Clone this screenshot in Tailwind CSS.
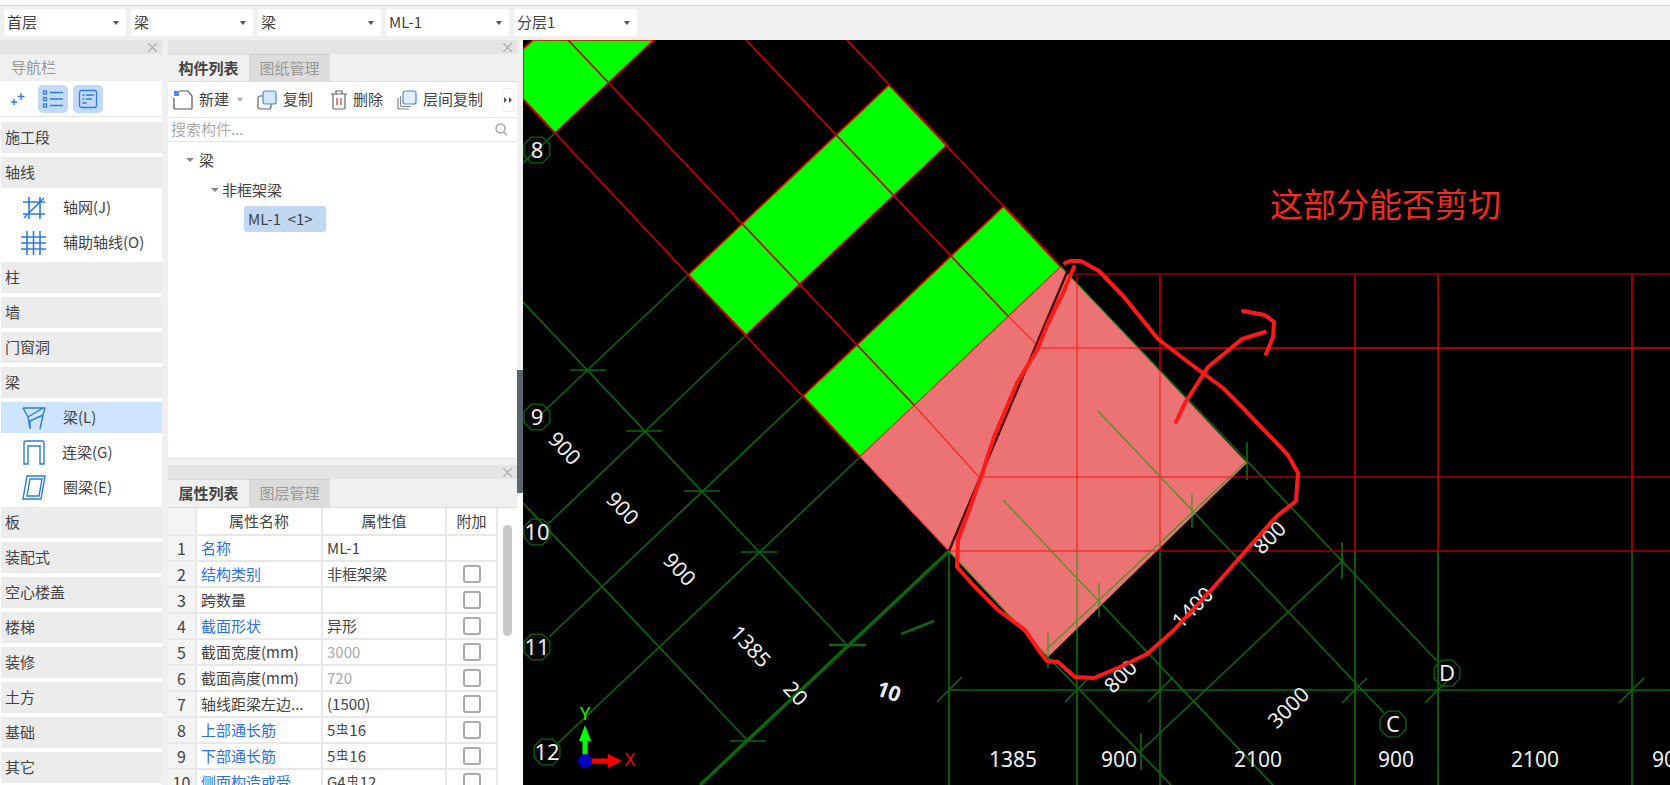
<!DOCTYPE html>
<html lang="zh">
<head>
    <meta charset="UTF-8">
    <title>构件列表</title>
    <script src="https://cdn.jsdelivr.net/npm/@tailwindcss/browser@4"></script>
</head>
<body class="w-[1670px] h-[785px] overflow-hidden bg-[#f0f0f0] text-[15px] text-[#444] font-['Noto_Sans_CJK_SC','Noto_Sans',sans-serif]">
    <div class="h-[6px] bg-white border-b border-[#d8d8d8]"></div>

    <!-- Floor / type selectors -->
    <div class="h-[34px] flex items-start pt-[3px] pl-[4px] gap-[5px] bg-[#f0f0f0]">
        <div class="w-[122px] h-[27px] flex items-center justify-between px-[3px] bg-white rounded-[3px]"><span>首层</span><span class="border-x-[3px] border-x-transparent border-t-[4px] border-t-[#555] mr-[4px]"></span></div>
        <div class="w-[122px] h-[27px] flex items-center justify-between px-[3px] bg-white rounded-[3px]"><span>梁</span><span class="border-x-[3px] border-x-transparent border-t-[4px] border-t-[#555] mr-[4px]"></span></div>
        <div class="w-[123px] h-[27px] flex items-center justify-between px-[3px] bg-white rounded-[3px]"><span>梁</span><span class="border-x-[3px] border-x-transparent border-t-[4px] border-t-[#555] mr-[4px]"></span></div>
        <div class="w-[123px] h-[27px] flex items-center justify-between px-[3px] bg-white rounded-[3px]"><span>ML-1</span><span class="border-x-[3px] border-x-transparent border-t-[4px] border-t-[#555] mr-[4px]"></span></div>
        <div class="w-[123px] h-[27px] flex items-center justify-between px-[3px] bg-white rounded-[3px]"><span>分层1</span><span class="border-x-[3px] border-x-transparent border-t-[4px] border-t-[#555] mr-[4px]"></span></div>
    </div>

    <div class="flex h-[745px]">
        <!-- Navigation -->
        <aside class="w-[162px] shrink-0 bg-white overflow-hidden">
            <div class="h-[14px] bg-[#e4e4e4] flex items-center justify-end pr-[5px]">
                <svg class="w-[9px] h-[9px]" viewBox="0 0 9 9" stroke="#aaa" stroke-width="1.200"><path d="M0 0L9 9M9 0L0 9"/></svg>
            </div>
            <div class="h-[27px] bg-[#f0f0f0] flex items-center pl-[11px] text-[#999]">导航栏</div>
            <div class="h-[36px] flex items-center border-b border-[#e4e4e4]">
                <svg class="ml-[10px] w-[16px] h-[16px]" viewBox="0 0 16 16" fill="none" stroke="#2d7ce0" stroke-width="1.400"><path d="M11 2v7M7.500 5.500h7M4 8v6M1 11h6"/></svg>
                <div class="ml-[12px] w-[30px] h-[28px] bg-[#c2daf5] rounded-[5px] flex items-center justify-center">
                    <svg class="w-[22px] h-[20px]" viewBox="0 0 22 20" fill="none" stroke="#2d7ce0" stroke-width="1.300"><rect x="1.500" y="2" width="3" height="3"/><rect x="1.500" y="8.500" width="3" height="3"/><rect x="1.500" y="15" width="3" height="3"/><path d="M8 3.500h13M8 10h13M8 16.500h13"/></svg>
                </div>
                <div class="ml-[5px] w-[30px] h-[28px] bg-[#c2daf5] rounded-[5px] flex items-center justify-center">
                    <svg class="w-[20px] h-[20px]" viewBox="0 0 20 20" fill="none" stroke="#2d7ce0" stroke-width="1.300"><rect x="1.500" y="1.500" width="17" height="17" rx="2"/><path d="M4.500 6h2M8 6h8M4.500 10h2M8 10h6M4.500 14h4"/></svg>
                </div>
            </div>
            <div class="pt-[5px] pl-[1px]">
                <div class="h-[31px] mb-[4px] bg-[#ececec] flex items-center pl-[4px]">施工段</div>
                <div class="h-[31px] mb-[4px] bg-[#ececec] flex items-center pl-[4px]">轴线</div>
                <div class="h-[31px] mb-[4px] flex items-center">
                    <svg class="ml-[21px] w-[24px] h-[24px]" viewBox="0 0 24 24" fill="none" stroke="#2d7ce0" stroke-width="1.600"><path d="M7 1v22M18 1v22M1 6h22M1 18h22M2 22L22 2"/></svg>
                    <span class="ml-[17px]">轴网(J)</span>
                </div>
                <div class="h-[31px] mb-[4px] flex items-center">
                    <svg class="ml-[20px] w-[25px] h-[24px]" viewBox="0 0 25 24" fill="none" stroke="#2d7ce0" stroke-width="1.600"><path d="M6 0v24M12.500 0v24M19 0v24M0 6h25M0 12h25M0 18h25"/></svg>
                    <span class="ml-[17px]">辅助轴线(O)</span>
                </div>
                <div class="h-[31px] mb-[4px] bg-[#ececec] flex items-center pl-[4px]">柱</div>
                <div class="h-[31px] mb-[4px] bg-[#ececec] flex items-center pl-[4px]">墙</div>
                <div class="h-[31px] mb-[4px] bg-[#ececec] flex items-center pl-[4px]">门窗洞</div>
                <div class="h-[31px] mb-[4px] bg-[#ececec] flex items-center pl-[4px]">梁</div>
                <div class="h-[31px] mb-[4px] bg-[#cfe5fd] flex items-center">
                    <svg class="ml-[21px] w-[24px] h-[24px]" viewBox="0 0 24 24" fill="none" stroke="#2d7ce0" stroke-width="1.400"><path d="M1 2h22l-2 7-3 14M1 2l5 9 2 12V15L21 9M6 11l15-9"/></svg>
                    <span class="ml-[17px]">梁(L)</span>
                </div>
                <div class="h-[31px] mb-[4px] flex items-center">
                    <svg class="ml-[22px] w-[22px] h-[25px]" viewBox="0 0 22 25" fill="none" stroke="#2d7ce0" stroke-width="1.400"><path d="M1 24V3q0-2 2-2h16q2 0 2 2v21h-4V6H5v18z"/></svg>
                    <span class="ml-[17px]">连梁(G)</span>
                </div>
                <div class="h-[31px] mb-[4px] flex items-center">
                    <svg class="ml-[21px] w-[24px] h-[25px]" viewBox="0 0 24 25" fill="none" stroke="#2d7ce0" stroke-width="1.400"><path d="M5 1h18l-4 23H1zM8 4h12l-3 17H5z"/></svg>
                    <span class="ml-[17px]">圈梁(E)</span>
                </div>
                <div class="h-[31px] mb-[4px] bg-[#ececec] flex items-center pl-[4px]">板</div>
                <div class="h-[31px] mb-[4px] bg-[#ececec] flex items-center pl-[4px]">装配式</div>
                <div class="h-[31px] mb-[4px] bg-[#ececec] flex items-center pl-[4px]">空心楼盖</div>
                <div class="h-[31px] mb-[4px] bg-[#ececec] flex items-center pl-[4px]">楼梯</div>
                <div class="h-[31px] mb-[4px] bg-[#ececec] flex items-center pl-[4px]">装修</div>
                <div class="h-[31px] mb-[4px] bg-[#ececec] flex items-center pl-[4px]">土方</div>
                <div class="h-[31px] mb-[4px] bg-[#ececec] flex items-center pl-[4px]">基础</div>
                <div class="h-[31px] mb-[4px] bg-[#ececec] flex items-center pl-[4px]">其它</div>
            </div>
        </aside>

        <div class="w-[6px] shrink-0 bg-[#f0f0f0]"></div>

        <!-- Component list + properties -->
        <section class="w-[349px] shrink-0 flex flex-col overflow-hidden">
            <div class="h-[14px] shrink-0 bg-[#e4e4e4] flex items-center justify-end pr-[5px]">
                <svg class="w-[9px] h-[9px]" viewBox="0 0 9 9" stroke="#aaa" stroke-width="1.200"><path d="M0 0L9 9M9 0L0 9"/></svg>
            </div>
            <div class="h-[28px] shrink-0 flex bg-[#f0f0f0] border-b border-[#ddd]">
                <div class="w-[81px] flex items-center justify-center font-bold text-[#444] border-t border-[#ddd]">构件列表</div>
                <div class="w-[81px] flex items-center justify-center bg-[#dcdcdc] text-[#999] border-t border-[#ccc]">图纸管理</div>
            </div>
            <div class="h-[36px] shrink-0 flex items-center bg-white border-b border-[#e4e4e4]">
                <svg class="ml-[5px] w-[20px] h-[20px]" viewBox="0 0 20 20" fill="none"><path d="M1 8v10q0 1 1 1h16q1 0 1-1V6l-4-5H6" stroke="#555" stroke-width="1.200"/><rect x="1" y="1" width="5" height="5" fill="#4a90e8"/></svg>
                <span class="ml-[6px]">新建</span>
                <span class="ml-[8px] border-x-[3px] border-x-transparent border-t-[4px] border-t-[#aaa]"></span>
                <svg class="ml-[14px] w-[20px] h-[20px]" viewBox="0 0 20 20" fill="none"><rect x="1" y="6" width="13" height="13" rx="2" stroke="#666" stroke-width="1.200"/><rect x="6" y="1" width="13" height="13" rx="2" fill="#d6e7fb" stroke="#3d8ae8" stroke-width="1.200"/></svg>
                <span class="ml-[6px]">复制</span>
                <svg class="ml-[17px] w-[18px] h-[20px]" viewBox="0 0 18 20" fill="none" stroke="#666" stroke-width="1.200"><path d="M1 4h16M6 4V1h6v3M3 4v14q0 1 1 1h10q1 0 1-1V4"/><path d="M7 8v7M11 8v7" stroke="#e03030"/></svg>
                <span class="ml-[5px]">删除</span>
                <svg class="ml-[14px] w-[20px] h-[20px]" viewBox="0 0 20 20" fill="none"><path d="M1 8v9q0 2 2 2h9M3.500 6v9q0 1.500 1.500 1.500h9" stroke="#888" stroke-width="1.200"/><rect x="6" y="1" width="13" height="13" rx="2" fill="#e4effc" stroke="#3d8ae8" stroke-width="1.200"/></svg>
                <span class="ml-[6px]">层间复制</span>
                <div class="ml-[19px] w-[12px] h-[24px] bg-white border border-[#eee] rounded-[3px] flex items-center justify-center">
                    <svg class="w-[8px] h-[6px]" viewBox="0 0 8 6" fill="#555"><path d="M0 0l3 3-3 3zM5 0l3 3-3 3z"/></svg>
                </div>
            </div>
            <div class="h-[24px] shrink-0 flex items-center justify-between px-[3px] pr-[9px] bg-white border-b border-[#e4e4e4] text-[#aaa]">
                <span>搜索构件...</span>
                <svg class="w-[13px] h-[13px]" viewBox="0 0 13 13" fill="none" stroke="#aaa" stroke-width="1.500"><circle cx="5.500" cy="5.500" r="4.500"/><path d="M9 9l3 3"/></svg>
            </div>
            <div class="h-[317px] shrink-0 bg-white border-b border-[#e4e4e4] pt-[3px]">
                <div class="h-[30px] flex items-center pl-[18px]"><span class="border-x-[4px] border-x-transparent border-t-[4px] border-t-[#888] mr-[5px]"></span>梁</div>
                <div class="h-[30px] flex items-center pl-[43px]"><span class="border-x-[4px] border-x-transparent border-t-[4px] border-t-[#888] mr-[3px]"></span>非框架梁</div>
                <div class="mt-[1px] ml-[76px] w-[82px] h-[26px] flex items-center pl-[4px] bg-[#c0d8f1] rounded-[3px] whitespace-pre">ML-1  &lt;1&gt;</div>
            </div>
            <div class="h-[6px] shrink-0 bg-[#f0f0f0]"></div>
            <div class="h-[14px] shrink-0 bg-[#e4e4e4] flex items-center justify-end pr-[5px]">
                <svg class="w-[9px] h-[9px]" viewBox="0 0 9 9" stroke="#aaa" stroke-width="1.200"><path d="M0 0L9 9M9 0L0 9"/></svg>
            </div>
            <div class="h-[29px] shrink-0 flex bg-[#f0f0f0] border-b border-[#ddd]">
                <div class="w-[81px] flex items-center justify-center font-bold text-[#444] border-t border-[#ddd]">属性列表</div>
                <div class="w-[81px] flex items-center justify-center bg-[#dcdcdc] text-[#999] border-t border-[#ccc]">图层管理</div>
            </div>
            <div class="flex-1 flex bg-white min-h-0">
                <table class="w-[329px] table-fixed border-collapse self-start shrink-0">
                    <colgroup><col class="w-[28px]"><col class="w-[126px]"><col class="w-[124px]"><col class="w-[51px]"></colgroup>
                    <thead>
                        <tr class="h-[27px]">
                            <th class="font-normal border-r-2 border-b-2 border-[#e8e8e8] bg-[#f4f4f4]"></th>
                            <th class="font-normal border-r-2 border-b-2 border-[#e8e8e8] text-center">属性名称</th>
                            <th class="font-normal border-r-2 border-b-2 border-[#e8e8e8] text-center">属性值</th>
                            <th class="font-normal border-r-2 border-b-2 border-[#e8e8e8] text-center">附加</th>
                        </tr>
                    </thead>
                    <tbody>
                        <tr class="h-[26px]">
                            <td class="border-r-2 border-b-2 border-[#e8e8e8] bg-[#f4f4f4] text-center text-[16px]">1</td>
                            <td class="border-r-2 border-b-2 border-[#e8e8e8] pl-[4px] text-[#2f6fe8]">名称</td>
                            <td class="border-r-2 border-b-2 border-[#e8e8e8] pl-[4px]">ML-1</td>
                            <td class="border-r-2 border-b-2 border-[#e8e8e8]"></td>
                        </tr>
                        <tr class="h-[26px]">
                            <td class="border-r-2 border-b-2 border-[#e8e8e8] bg-[#f4f4f4] text-center text-[16px]">2</td>
                            <td class="border-r-2 border-b-2 border-[#e8e8e8] pl-[4px] text-[#2f6fe8]">结构类别</td>
                            <td class="border-r-2 border-b-2 border-[#e8e8e8] pl-[4px]">非框架梁</td>
                            <td class="border-r-2 border-b-2 border-[#e8e8e8]"><div class="w-[18px] h-[18px] mx-auto border-2 border-[#aaa] rounded-[3px]"></div></td>
                        </tr>
                        <tr class="h-[26px]">
                            <td class="border-r-2 border-b-2 border-[#e8e8e8] bg-[#f4f4f4] text-center text-[16px]">3</td>
                            <td class="border-r-2 border-b-2 border-[#e8e8e8] pl-[4px]">跨数量</td>
                            <td class="border-r-2 border-b-2 border-[#e8e8e8] pl-[4px]"></td>
                            <td class="border-r-2 border-b-2 border-[#e8e8e8]"><div class="w-[18px] h-[18px] mx-auto border-2 border-[#aaa] rounded-[3px]"></div></td>
                        </tr>
                        <tr class="h-[26px]">
                            <td class="border-r-2 border-b-2 border-[#e8e8e8] bg-[#f4f4f4] text-center text-[16px]">4</td>
                            <td class="border-r-2 border-b-2 border-[#e8e8e8] pl-[4px] text-[#2f6fe8]">截面形状</td>
                            <td class="border-r-2 border-b-2 border-[#e8e8e8] pl-[4px]">异形</td>
                            <td class="border-r-2 border-b-2 border-[#e8e8e8]"><div class="w-[18px] h-[18px] mx-auto border-2 border-[#aaa] rounded-[3px]"></div></td>
                        </tr>
                        <tr class="h-[26px]">
                            <td class="border-r-2 border-b-2 border-[#e8e8e8] bg-[#f4f4f4] text-center text-[16px]">5</td>
                            <td class="border-r-2 border-b-2 border-[#e8e8e8] pl-[4px]">截面宽度(mm)</td>
                            <td class="border-r-2 border-b-2 border-[#e8e8e8] pl-[4px] text-[#aaa]">3000</td>
                            <td class="border-r-2 border-b-2 border-[#e8e8e8]"><div class="w-[18px] h-[18px] mx-auto border-2 border-[#aaa] rounded-[3px]"></div></td>
                        </tr>
                        <tr class="h-[26px]">
                            <td class="border-r-2 border-b-2 border-[#e8e8e8] bg-[#f4f4f4] text-center text-[16px]">6</td>
                            <td class="border-r-2 border-b-2 border-[#e8e8e8] pl-[4px]">截面高度(mm)</td>
                            <td class="border-r-2 border-b-2 border-[#e8e8e8] pl-[4px] text-[#aaa]">720</td>
                            <td class="border-r-2 border-b-2 border-[#e8e8e8]"><div class="w-[18px] h-[18px] mx-auto border-2 border-[#aaa] rounded-[3px]"></div></td>
                        </tr>
                        <tr class="h-[26px]">
                            <td class="border-r-2 border-b-2 border-[#e8e8e8] bg-[#f4f4f4] text-center text-[16px]">7</td>
                            <td class="border-r-2 border-b-2 border-[#e8e8e8] pl-[4px] whitespace-nowrap">轴线距梁左边...</td>
                            <td class="border-r-2 border-b-2 border-[#e8e8e8] pl-[4px]">(1500)</td>
                            <td class="border-r-2 border-b-2 border-[#e8e8e8]"><div class="w-[18px] h-[18px] mx-auto border-2 border-[#aaa] rounded-[3px]"></div></td>
                        </tr>
                        <tr class="h-[26px]">
                            <td class="border-r-2 border-b-2 border-[#e8e8e8] bg-[#f4f4f4] text-center text-[16px]">8</td>
                            <td class="border-r-2 border-b-2 border-[#e8e8e8] pl-[4px] text-[#2f6fe8]">上部通长筋</td>
                            <td class="border-r-2 border-b-2 border-[#e8e8e8] pl-[4px]">5<span class="text-[12px] align-[2px] mx-[1px]">虫</span>16</td>
                            <td class="border-r-2 border-b-2 border-[#e8e8e8]"><div class="w-[18px] h-[18px] mx-auto border-2 border-[#aaa] rounded-[3px]"></div></td>
                        </tr>
                        <tr class="h-[26px]">
                            <td class="border-r-2 border-b-2 border-[#e8e8e8] bg-[#f4f4f4] text-center text-[16px]">9</td>
                            <td class="border-r-2 border-b-2 border-[#e8e8e8] pl-[4px] text-[#2f6fe8]">下部通长筋</td>
                            <td class="border-r-2 border-b-2 border-[#e8e8e8] pl-[4px]">5<span class="text-[12px] align-[2px] mx-[1px]">虫</span>16</td>
                            <td class="border-r-2 border-b-2 border-[#e8e8e8]"><div class="w-[18px] h-[18px] mx-auto border-2 border-[#aaa] rounded-[3px]"></div></td>
                        </tr>
                        <tr class="h-[26px]">
                            <td class="border-r-2 border-b-2 border-[#e8e8e8] bg-[#f4f4f4] text-center text-[16px]">10</td>
                            <td class="border-r-2 border-b-2 border-[#e8e8e8] pl-[4px] text-[#2f6fe8] whitespace-nowrap">侧面构造或受...</td>
                            <td class="border-r-2 border-b-2 border-[#e8e8e8] pl-[4px]">G4<span class="text-[12px] align-[2px] mx-[1px]">虫</span>12</td>
                            <td class="border-r-2 border-b-2 border-[#e8e8e8]"><div class="w-[18px] h-[18px] mx-auto border-2 border-[#aaa] rounded-[3px]"></div></td>
                        </tr>
                    </tbody>
                </table>
                <div class="flex-1 flex justify-center pt-[17px]"><div class="w-[9px] h-[111px] bg-[#c8c8c8] rounded-full"></div></div>
            </div>
        </section>

        <!-- Splitter -->
        <div class="w-[6px] shrink-0 bg-white flex flex-col">
            <div class="h-[330px] bg-[#f0f0f0]"></div>
            <div class="h-[123px] bg-[#5a6570]"></div>
        </div>

        <!-- CAD viewport: coordinates in the viewBox match screen pixels -->
        <svg class="flex-1 h-[745px] bg-black" viewBox="523 40 1147 745" fill="none" font-family="'Noto Sans','Noto Sans CJK SC',sans-serif">
            <defs>
                <clipPath id="pinkClip"><polygon points="1061,267 1247,463 1048,657 860,457"/></clipPath>
                <polygon id="oct" points="12.900,5.400 5.400,12.900 -5.400,12.900 -12.900,5.400 -12.900,-5.400 -5.400,-12.900 5.400,-12.900 12.900,-5.400"/>
                <g id="greenLines">
                    <path d="M949 551V785M1077 551V785M1160 551V785M1355 551V785M1438 551V785M1632 551V785M949 690H1670"/>
                    <path d="M523 302L847 645M523 503L748 741M523 163L555 133M540 415L688 275M549 523L746 335M549 637L803 396M558 743L860 457"/>
                    <path d="M1098 411L1384 713M1003 500L1273 785M1247 461L1437 661M949 551L1048 657L1171 785M1061 267L1247 461"/>
                    <path d="M1247 461L1046 650M1342 561L1141 751"/>
                    <path d="M570 370H606M626 431H662M684 491H720M741 552H777M730 741H766"/>
                    <path d="M1048 633V668M1099 583V617M1247 442V480M1192 494V528M1342 542V579M1141 733V770"/>
                    <path d="M937 702L962 677M1065 702L1090 677M1148 702L1173 677M1342 703L1367 678M1425 703L1450 678M1619 703L1644 678"/>
                </g>
            </defs>

            <!-- Grid -->
            <use href="#greenLines" stroke="#0d660d" stroke-width="1.700"/>
            <path d="M700 785L949 551" stroke="#0d660d" stroke-width="3.500"/>
            <path d="M829 645H866" stroke="#0d660d" stroke-width="2.500"/>
            <path d="M901 634L934 621" stroke="#0d660d" stroke-width="2.500"/>
            <path d="M1077 274V551M1160 274V551M1355 274V551M1438 274V551M1632 274V551" stroke="#b30000" stroke-width="1.700"/>
            <path d="M1077 274H1670" stroke="#8a0000" stroke-width="1.700"/>
            <path d="M1037 348H1670" stroke="#e00000" stroke-width="1.700"/>
            <path d="M979 477H1670M949 551H1670" stroke="#a80000" stroke-width="1.700"/>

            <!-- Beam slabs -->
            <polygon points="533,40 654,40 555,133 523,99 523,49" fill="#00ff00" stroke="#e00000" stroke-width="1.700"/>
            <polygon points="889,85 947,145 746,335 688,275" fill="#00ff00" stroke="#e00000" stroke-width="1.700"/>
            <polygon points="1004,206 1061,267 860,457 803,396" fill="#00ff00" stroke="#e00000" stroke-width="1.700"/>
            <polygon points="1061,267 1247,463 1048,657 860,457" fill="#ec7373"/>
            <path d="M568 40L914 405M523 99L860 457M746 40L1008 316M847 40L1061 267" stroke="#c80000" stroke-width="1.700"/>

            <!-- Lines seen through the pink selection -->
            <g clip-path="url(#pinkClip)">
                <use href="#greenLines" stroke="#5f8f2f" stroke-width="1.500"/>
                <path d="M1077 274V551M1160 274V551M1037 348H1670M979 477H1670M949 551H1670" stroke="#f53030" stroke-width="1.500"/>
                <path d="M860 457L949 551M914 405L979 477M1008 316L1037 345" stroke="#f53030" stroke-width="1.400"/>
            </g>
            <path d="M949 551L1068 270" stroke="#4a0808" stroke-width="2.500"/>

            <!-- Axis bubbles -->
            <g stroke="#0d660d" stroke-width="1.300">
                <use href="#oct" x="537" y="150"/>
                <use href="#oct" x="537" y="417"/>
                <use href="#oct" x="537" y="532"/>
                <use href="#oct" x="537" y="647"/>
                <use href="#oct" x="547" y="752"/>
                <use href="#oct" x="1393" y="724"/>
                <use href="#oct" x="1447" y="673"/>
            </g>
            <g fill="#eeeeee" font-size="22" text-anchor="middle">
                <text x="537" y="158">8</text>
                <text x="537" y="425">9</text>
                <text x="537" y="540">10</text>
                <text x="537" y="655">11</text>
                <text x="547" y="760">12</text>
                <text x="1393" y="732">C</text>
                <text x="1447" y="681">D</text>
            </g>

            <!-- Dimensions -->
            <g fill="#eeeeee" font-size="21" text-anchor="middle" dominant-baseline="central">
                <text transform="translate(565 448) rotate(47)">900</text>
                <text transform="translate(623 508) rotate(47)">900</text>
                <text transform="translate(680 569) rotate(47)">900</text>
                <text transform="translate(751 646) rotate(47)">1385</text>
                <text transform="translate(796 693) rotate(47)">20</text>
                <text transform="translate(889 691) rotate(20)" font-weight="700">10</text>
                <text transform="translate(1269 537) rotate(-45)">800</text>
                <text transform="translate(1192 607) rotate(-45)">1400</text>
                <text transform="translate(1120 676) rotate(-45)">800</text>
                <text transform="translate(1288 707) rotate(-45)">3000</text>
                <text x="1013" y="759">1385</text>
                <text x="1119" y="759">900</text>
                <text x="1258" y="759">2100</text>
                <text x="1396" y="759">900</text>
                <text x="1535" y="759">2100</text>
                <text x="1670" y="759">900</text>
            </g>

            <!-- UCS marker -->
            <path d="M585 761V740" stroke="#00ff00" stroke-width="5"/>
            <polygon points="585,725 579,741 591,741" fill="#00ff00"/>
            <path d="M585 761H610" stroke="#ff0000" stroke-width="5"/>
            <polygon points="622,761 608,754 608,768" fill="#ff0000"/>
            <circle cx="585" cy="761" r="7" fill="#0000c0"/>
            <text x="585" y="720" fill="#00ff00" font-size="18" text-anchor="middle">Y</text>
            <text x="630" y="766" fill="#ff0000" font-size="18" text-anchor="middle">X</text>

            <!-- Hand-drawn markup -->
            <path d="M1074 267L1063 293L1048 323L1037 350L1017 383L994 437L981 477L968 513L958 540L957 567L975 587L998 610L1025 630L1040 652L1047 661L1058 662L1075 677L1094 678L1120 667L1147 654L1173 631L1212 589L1250 546L1277 516L1296 501L1298 473L1288 455L1242 407L1223 388L1192 365L1158 339L1124 297L1099 271L1081 261L1070 261L1065 263" stroke="#ff1a1a" stroke-width="4" stroke-linejoin="round" stroke-linecap="round"/>
            <path d="M1176 422L1185 403L1208 367L1242 339L1265 332M1243 311L1265 315L1274 322L1273 337L1266 354" stroke="#ff1a1a" stroke-width="4" stroke-linejoin="round" stroke-linecap="round"/>
            <text x="1270" y="217" fill="#f02a1c" font-size="33" font-family="'Noto Sans CJK SC',sans-serif">这部分能否剪切</text>
        </svg>
    </div>
</body>
</html>
